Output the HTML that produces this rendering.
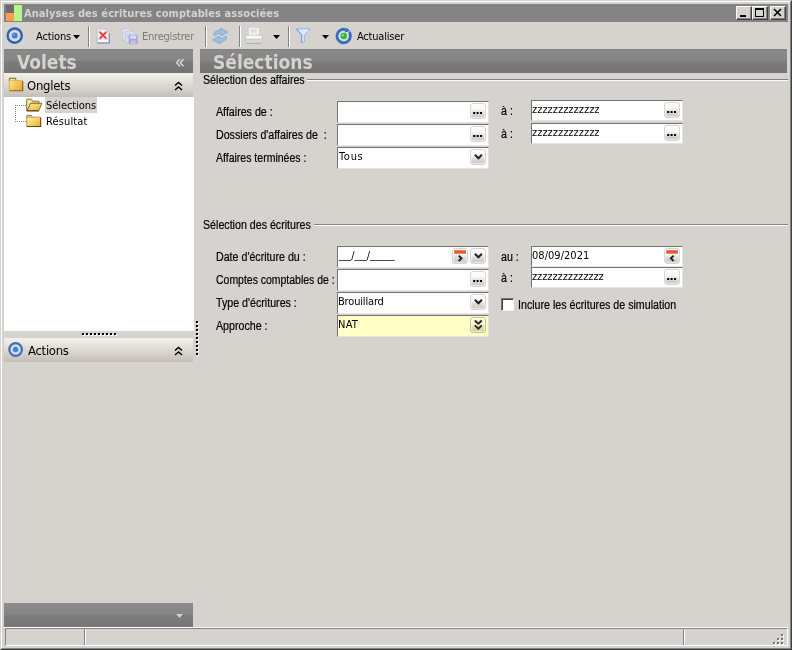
<!DOCTYPE html>
<html lang="fr">
<head>
<meta charset="utf-8">
<title>Analyses des écritures comptables associées</title>
<style>
*{box-sizing:border-box;margin:0;padding:0}
html,body{width:792px;height:650px;overflow:hidden}
body{background:#d6d3ce;font-family:"Liberation Sans",sans-serif;font-size:12px;color:#000;position:relative}
.abs{position:absolute}
.tah{font-family:"DejaVu Sans Condensed","DejaVu Sans","Liberation Sans",sans-serif}
.t{position:absolute;white-space:nowrap;line-height:1}
/* window frame */
#frame{left:0;top:0;width:792px;height:650px;border-top:1px solid #d6d3ce;border-left:1px solid #d6d3ce;border-right:1px solid #404040;border-bottom:1px solid #404040}
#frame2{left:1px;top:1px;width:790px;height:648px;border-top:1px solid #fff;border-left:1px solid #fff;border-right:1px solid #848284;border-bottom:1px solid #848284}
#title{left:4px;top:4px;width:784px;height:18px;background:#858386}
#title .txt{left:20px;top:3px;font-weight:bold;font-size:11px;color:#d6d3ce;line-height:14px;letter-spacing:0.08px}
.wb{position:absolute;top:2px;width:16px;height:14px;background:#d6d3ce;border-top:1px solid #fff;border-left:1px solid #fff;border-right:1px solid #404040;border-bottom:1px solid #404040;box-shadow:inset -1px -1px 0 #848284}
/* toolbar */
.sep{position:absolute;top:26px;width:2px;height:21px;border-left:1px solid #848284;border-right:1px solid #fff}
/* panels */
.hdr{position:absolute;top:49px;height:24px;background:linear-gradient(#7f7f7f 0,#898989 8%,#868686 46%,#7b7b7b 56%,#747474 100%);color:#d6d3ce;font-weight:bold}
.ghdr{position:absolute;left:4px;width:189px;height:24px;background:linear-gradient(#f3f1ec 0%,#e6e3dd 30%,#d6d3cc 62%,#c4c0b7 100%)}
/* inputs */
.inp{position:absolute;height:22px;background:#fff;border-top:1px solid #737373;border-left:1px solid #737373;border-right:1px solid #e6e4e0;border-bottom:1px solid #e6e4e0}
.inp.y{background:#ffffc6}
.inp{width:152px}
.inp.r{height:21px}
.ib{position:absolute;right:2px;top:1px;width:16px;height:16px;border:1px solid #d5d4d1;border-radius:3px;background:linear-gradient(#fff 0%,#f6f6f5 40%,#dcdbd9 62%,#cac9c7 100%);box-shadow:inset 0 0 0 1px rgba(255,255,255,.55)}
.y .ib{background:linear-gradient(#ffffd6 0%,#f8f8c8 40%,#e0e0b2 62%,#cfcfa4 100%);border-color:#c2c298}
.ic{position:absolute;left:-1px;top:-1px}
.chk{position:absolute;left:501px;top:298px;width:13px;height:13px;background:#fff;border-top:1px solid #737373;border-left:1px solid #737373;border-right:1px solid #f4f3f0;border-bottom:1px solid #f4f3f0;box-shadow:inset 1px 1px 0 #404040}
.val{position:absolute;left:0;top:1px;font-size:11px;line-height:14px;white-space:nowrap;font-family:"DejaVu Sans Condensed","DejaVu Sans","Liberation Sans",sans-serif}
.cb .val,.r .val{top:2px}
.lbl{position:absolute;font-size:12px;line-height:14px;white-space:nowrap;transform:scaleX(0.888);transform-origin:0 0;-webkit-text-stroke:0.2px #000}
.gline{position:absolute;height:2px;border-top:1px solid #848284;border-bottom:1px solid #fff}
.sb{position:absolute;top:628px;height:18px;border-top:1px solid #848284;border-left:1px solid #848284;border-right:1px solid #fff;border-bottom:1px solid #fff}
</style>
</head>
<body>
<div id="root" style="position:absolute;left:0;top:0;width:792px;height:650px;will-change:transform">
<div id="frame" class="abs"></div>
<div id="frame2" class="abs"></div>

<!-- title bar -->
<div id="title" class="abs">
  <svg class="abs" style="left:2px;top:1px" width="16" height="16" viewBox="0 0 16 16"><rect x="0" y="0" width="8" height="8" fill="#6b6b6b"/><rect x="0" y="8" width="8" height="8" fill="#ff9c52"/><rect x="8" y="0" width="8" height="16" fill="#b5f58c"/></svg>
  <div class="t txt tah">Analyses des écritures comptables associées</div>
  <div class="wb" style="left:732px"><svg width="14" height="12" class="abs" style="left:0;top:0"><rect x="3" y="8" width="6" height="2" fill="#000"/></svg></div>
  <div class="wb" style="left:748px"><svg width="14" height="12" class="abs" style="left:0;top:0"><rect x="2.5" y="1.5" width="8" height="8" fill="none" stroke="#000"/><rect x="2" y="1" width="9" height="2" fill="#000"/></svg></div>
  <div class="wb" style="left:766px"><svg width="14" height="12" class="abs" style="left:0;top:0"><path d="M3 2 L10 9 M10 2 L3 9" stroke="#000" stroke-width="1.6" fill="none"/></svg></div>
</div>

<!-- toolbar -->
<div id="toolbar" class="abs" style="left:4px;top:22px;width:784px;height:27px"></div>
<svg class="abs" style="left:6px;top:27px" width="18" height="18" viewBox="0 0 18 18"><circle cx="8.700" cy="8.600" r="7.100" fill="#dddcd6" stroke="#2d60b9" stroke-width="2.400"/><circle cx="8.700" cy="8.600" r="3" fill="#3d7de0"/><circle cx="8" cy="7.800" r="1" fill="#6fa4f2"/></svg>
<div class="t tah" style="left:36px;top:30px;font-size:11px;line-height:13px;letter-spacing:-0.15px">Actions</div>
<svg class="abs" style="left:73px;top:35px" width="8" height="5"><path d="M0 0h7l-3.500 4z" fill="#000"/></svg>
<div class="sep" style="left:88px"></div>
<svg class="abs" style="left:96px;top:28px" width="15" height="17" viewBox="0 0 15 17"><path d="M1.200 1.100h8.800l3 3v10.600h-11.800z" fill="#fff" stroke="#b4bfd6" stroke-width="1"/><path d="M1.200 15.100h12.200v-10" fill="none" stroke="#8c99b4" stroke-width="1.200"/><path d="M3.800 4l6.400 6.600M10.200 4l-6.400 6.600" stroke="#ffb9b9" stroke-width="3.200" stroke-linecap="round"/><path d="M3.800 4l6.400 6.600M10.200 4l-6.400 6.600" stroke="#e23030" stroke-width="1.400"/></svg>
<svg class="abs" style="left:122px;top:28px" width="17" height="17" viewBox="0 0 17 17"><path d="M0.900 0.900h7l2 2v9h-9z" fill="#e4e9f3" stroke="#c3cbdc" stroke-width="0.900"/><path d="M3.200 3.200h7l2 2v9h-9z" fill="#dde4f1" stroke="#bcc6dc" stroke-width="0.900"/><path d="M4.500 6h5M4.500 8h5M4.500 10h3" stroke="#b7c6e4" stroke-width="0.900"/><rect x="6.700" y="6.800" width="9" height="9.400" rx="0.800" fill="#a7a9dc"/><rect x="8.200" y="7.400" width="6" height="3.400" fill="#d6d8f0"/><rect x="8.800" y="12.400" width="4.800" height="3.800" fill="#c2c4ea"/></svg>
<div class="t tah" style="left:142px;top:30px;font-size:11px;line-height:13px;color:#7b7975;letter-spacing:-0.22px">Enregistrer</div>
<div class="sep" style="left:205px"></div>
<svg class="abs" style="left:211px;top:27px" width="19" height="18" viewBox="0 0 19 18"><g fill="#9cc1e8" stroke="#7d9cc6" stroke-width="0.700"><path d="M2.900 8C3 4.500 6 3.200 9.400 3.300V1.100L17 5.100L10 8.800V6.600C7 6.400 5.300 7 4.600 8.800Z"/><path d="M2.900 8C3 4.500 6 3.200 9.400 3.300V1.100L17 5.100L10 8.800V6.600C7 6.400 5.300 7 4.600 8.800Z" transform="rotate(180 9.300 9)"/></g></svg>
<div class="sep" style="left:239px"></div>
<svg class="abs" style="left:244px;top:26px" width="20" height="19" viewBox="0 0 20 19"><rect x="4.300" y="1.300" width="11.100" height="8.200" fill="#f5f5f5" stroke="#c9c9c9" stroke-width="0.800"/><rect x="6.300" y="2.900" width="7" height="3.800" fill="#dddddd"/><rect x="1.500" y="9.200" width="17" height="8.300" rx="2" fill="#ededec" stroke="#c0bfbd" stroke-width="0.800"/><rect x="2.500" y="9.800" width="15" height="2.600" rx="1" fill="#f8f8f8"/><path d="M2.500 13.300h15" stroke="#bdbdbd" stroke-width="0.900"/><rect x="2.200" y="14" width="15.600" height="3" fill="#d6d6d5"/><path d="M2.500 17.500h15" stroke="#aeaeae" stroke-width="0.900"/></svg>
<svg class="abs" style="left:273px;top:35px" width="8" height="5"><path d="M0 0h7l-3.500 4z" fill="#000"/></svg>
<div class="sep" style="left:288px"></div>
<svg class="abs" style="left:295px;top:27px" width="16" height="17" viewBox="0 0 16 17"><linearGradient id="fn1" x1="0" y1="0" x2="1" y2="0"><stop offset="0" stop-color="#c4d9f8"/><stop offset="1" stop-color="#f4f8ff"/></linearGradient><path d="M1.200 1.800H15L9.400 8.300V14.600L6.600 16V8.300Z" fill="url(#fn1)" stroke="#86aeec" stroke-width="0.900" stroke-linejoin="round"/><path d="M1.400 2L6.700 8.300V15.800" fill="none" stroke="#6696e4" stroke-width="0.900"/></svg>
<svg class="abs" style="left:322px;top:35px" width="8" height="5"><path d="M0 0h7l-3.500 4z" fill="#000"/></svg>
<svg class="abs" style="left:335px;top:27px" width="18" height="18" viewBox="0 0 18 18"><circle cx="8.700" cy="9" r="5.500" fill="#dfe3e6"/><path d="M14.190 5.160A6.700 6.700 0 1 1 10.430 2.530" fill="none" stroke="#3b6cc2" stroke-width="2.800"/><path d="M11.100 0.400L15.300 3.900L9.700 5.400Z" fill="#3b6cc2"/><circle cx="8.700" cy="9" r="3.300" fill="#2fbc33"/><circle cx="8" cy="8.200" r="1.200" fill="#6fe070"/></svg>
<div class="t tah" style="left:357px;top:30px;font-size:11px;line-height:13px;letter-spacing:-0.2px">Actualiser</div>

<!-- left panel -->
<div class="hdr" style="left:4px;width:189px"></div>
<div class="t tah" style="left:17px;top:51px;font-size:19px;line-height:22px;font-weight:bold;color:#d6d3ce">Volets</div>
<div class="t" style="left:175.500px;top:55px;font-size:16px;line-height:14px;color:#dedbd6;-webkit-text-stroke:0.3px #dedbd6">«</div>

<div class="ghdr" style="top:73px"></div>
<svg class="abs" style="left:8px;top:77px" width="16" height="15" viewBox="0 0 16 15"><linearGradient id="fg1" x1="0" y1="0" x2="1" y2="0.600"><stop offset="0" stop-color="#faed9e"/><stop offset="0.550" stop-color="#f3c45a"/><stop offset="1" stop-color="#eeaa38"/></linearGradient><path d="M1.300 4.200V1.700Q1.300 1.200 1.800 1.200H7.300Q7.800 1.200 7.800 1.700V3.900" fill="#e8dfb6" stroke="#7d6424" stroke-width="1"/><rect x="1.200" y="3.600" width="13.500" height="10.100" fill="url(#fg1)"/><path d="M1.300 13.700H14.700V3.900" fill="none" stroke="#7f6222" stroke-width="1.100"/><path d="M1.300 13.700V3.700H14.700" fill="none" stroke="#cfa548" stroke-width="0.800"/></svg>
<div class="t tah" style="left:27px;top:78px;font-size:13px;line-height:15px;letter-spacing:-0.28px">Onglets</div>
<svg class="abs" style="left:174px;top:81px" width="9" height="10" viewBox="0 0 9 10"><path d="M1 4.500l3.500-3 3.500 3M1 9l3.500-3 3.500 3" stroke="#000" stroke-width="1.500" fill="none"/></svg>

<div class="abs" style="left:4px;top:97px;width:190px;height:234px;background:#fff"></div>
<div class="abs" style="left:15px;top:105px;width:11px;height:1px;border-top:1px dotted #848284"></div>
<div class="abs" style="left:15px;top:105px;width:1px;height:17px;border-left:1px dotted #848284"></div>
<div class="abs" style="left:15px;top:121px;width:11px;height:1px;border-top:1px dotted #848284"></div>
<svg class="abs" style="left:26px;top:98px" width="17" height="14" viewBox="0 0 17 14"><linearGradient id="fg2" x1="0" y1="0" x2="1" y2="1"><stop offset="0" stop-color="#fdf0a0"/><stop offset="1" stop-color="#efae30"/></linearGradient><path d="M0.700 12.600V1.700Q0.700 1.200 1.200 1.200H5.500L6.500 3.200H13V5.300H4.600L1.400 12.600Z" fill="#f7e9a6" stroke="#7d6828" stroke-width="0.900"/><path d="M4.600 5.300H15.900L12.800 12.600H1.200Z" fill="url(#fg2)" stroke="#7d6828" stroke-width="0.900"/><path d="M0.800 12.900H12.900" stroke="#4e3f16" stroke-width="1.100"/></svg>
<div class="abs" style="left:45px;top:97px;width:52px;height:16px;background:#d6d3ce"></div>
<div class="t tah" style="left:46px;top:99px;font-size:11px;line-height:13px;letter-spacing:-0.08px">Sélections</div>
<svg class="abs" style="left:26px;top:114px" width="16" height="14" viewBox="0 0 16 14"><linearGradient id="fg3" x1="0" y1="0" x2="1" y2="0.800"><stop offset="0" stop-color="#fdf2a8"/><stop offset="0.600" stop-color="#f6cf62"/><stop offset="1" stop-color="#eeb038"/></linearGradient><path d="M0.700 3.600V1.900Q0.700 1.400 1.200 1.400H5.400L6.400 3.200" fill="#f5e6a4" stroke="#7d6828" stroke-width="0.900"/><rect x="0.700" y="3.200" width="14" height="9.200" fill="url(#fg3)"/><path d="M0.700 12.400V3.200H14.700" fill="none" stroke="#a88a3a" stroke-width="0.800"/><path d="M0.700 12.500H14.700V3.400" fill="none" stroke="#5a4a1c" stroke-width="1.100"/></svg>
<div class="t tah" style="left:46px;top:115px;font-size:11px;line-height:13px;letter-spacing:0.12px">Résultat</div>

<div class="abs" style="left:83px;top:334px;width:34px;height:2px;background:repeating-linear-gradient(90deg,#fff 0 2px,transparent 2px 4px)"></div><div class="abs" style="left:82px;top:333px;width:34px;height:2px;background:repeating-linear-gradient(90deg,#000 0 2px,transparent 2px 4px)"></div>

<div class="ghdr" style="top:338px"></div>
<svg class="abs" style="left:7px;top:341px" width="17" height="17" viewBox="0 0 17 17"><circle cx="8.600" cy="8.500" r="6.300" fill="#dcdbd6" stroke="#406cc4" stroke-width="2.200"/><circle cx="8.600" cy="8.500" r="2.700" fill="#3a86e6"/></svg>
<div class="t tah" style="left:28px;top:343px;font-size:13px;line-height:15px;letter-spacing:-0.3px">Actions</div>
<svg class="abs" style="left:174px;top:346px" width="9" height="10" viewBox="0 0 9 10"><path d="M1 4.500l3.500-3 3.500 3M1 9l3.500-3 3.500 3" stroke="#000" stroke-width="1.500" fill="none"/></svg>

<div class="abs" style="left:4px;top:603px;width:189px;height:24px;background:linear-gradient(#8c8c8c 0%,#868686 46%,#7b7b7b 54%,#777 100%)"></div>
<svg class="abs" style="left:176px;top:614px" width="8" height="5"><path d="M0 0h7l-3.500 4z" fill="#d6d3ce"/></svg>

<!-- splitter dots -->
<div class="abs" style="left:197px;top:322px;width:2px;height:34px;background:repeating-linear-gradient(180deg,#fff 0 2px,transparent 2px 4px)"></div><div class="abs" style="left:196px;top:321px;width:2px;height:34px;background:repeating-linear-gradient(180deg,#000 0 2px,transparent 2px 4px)"></div>

<!-- right panel -->
<div class="hdr" style="left:200px;width:587px"></div>
<div class="t tah" style="left:213px;top:51px;font-size:19px;line-height:22px;font-weight:bold;color:#d6d3ce">Sélections</div>

<div class="lbl" style="left:203px;top:73px">Sélection des affaires</div>
<div class="gline" style="left:307px;top:79px;width:481px"></div>

<div class="lbl" style="left:216px;top:105px">Affaires de :</div>
<div class="inp" style="left:337px;top:101px"><div class="ib"><svg class="ic" width="16" height="16"><rect x="3.200" y="9" width="2" height="2"/><rect x="6.600" y="9" width="2" height="2"/><rect x="10" y="9" width="2" height="2"/></svg></div></div>
<div class="lbl" style="left:501px;top:104px">à :</div>
<div class="inp r" style="left:531px;top:100px"><div class="val">zzzzzzzzzzzzz</div><div class="ib"><svg class="ic" width="16" height="16"><rect x="3.200" y="9" width="2" height="2"/><rect x="6.600" y="9" width="2" height="2"/><rect x="10" y="9" width="2" height="2"/></svg></div></div>

<div class="lbl" style="left:216px;top:128px">Dossiers d'affaires de&nbsp; :</div>
<div class="inp" style="left:337px;top:124px"><div class="ib"><svg class="ic" width="16" height="16"><rect x="3.200" y="9" width="2" height="2"/><rect x="6.600" y="9" width="2" height="2"/><rect x="10" y="9" width="2" height="2"/></svg></div></div>
<div class="lbl" style="left:501px;top:127px">à :</div>
<div class="inp r" style="left:531px;top:123px"><div class="val">zzzzzzzzzzzzz</div><div class="ib"><svg class="ic" width="16" height="16"><rect x="3.200" y="9" width="2" height="2"/><rect x="6.600" y="9" width="2" height="2"/><rect x="10" y="9" width="2" height="2"/></svg></div></div>

<div class="lbl" style="left:216px;top:151px;transform:scaleX(0.876)">Affaires terminées :</div>
<div class="inp cb" style="left:337px;top:147px"><div class="val" style="left:1px;letter-spacing:0.7px">Tous</div><div class="ib"><svg class="ic" width="16" height="16"><path d="M4.900 5.700l3.500 3.600 3.500-3.600" stroke="#222" stroke-width="2" fill="none"/></svg></div></div>

<div class="lbl" style="left:203px;top:218px">Sélection des écritures</div>
<div class="gline" style="left:314px;top:224px;width:474px"></div>

<div class="lbl" style="left:216px;top:250px">Date d'écriture du :</div>
<div class="inp" style="left:337px;top:246px"><div class="val" style="left:1px;font-family:'Liberation Sans',sans-serif">__<span class="tah">/</span>__<span class="tah">/</span>____</div><div class="ib" style="right:20px"><svg class="ic" width="16" height="16"><rect x="2.200" y="2.200" width="11.700" height="3.500" fill="#e65a33"/><path d="M6.700 7.600l2.800 2.700-2.800 2.700" stroke="#222" stroke-width="1.900" fill="none"/></svg></div><div class="ib"><svg class="ic" width="16" height="16"><path d="M4.900 5.700l3.500 3.600 3.500-3.600" stroke="#222" stroke-width="2" fill="none"/></svg></div></div>
<div class="lbl" style="left:501px;top:250px">au :</div>
<div class="inp r cb" style="left:531px;top:246px"><div class="val" style="letter-spacing:0.03px">08/09/2021</div><div class="ib"><svg class="ic" width="16" height="16"><rect x="2.200" y="2.200" width="11.700" height="3.500" fill="#e65a33"/><path d="M9.600 7.600l-2.800 2.700 2.800 2.700" stroke="#222" stroke-width="1.900" fill="none"/></svg></div></div>

<div class="lbl" style="left:216px;top:273px;transform:scaleX(0.872)">Comptes comptables de :</div>
<div class="inp" style="left:337px;top:269px"><div class="ib"><svg class="ic" width="16" height="16"><rect x="3.200" y="9" width="2" height="2"/><rect x="6.600" y="9" width="2" height="2"/><rect x="10" y="9" width="2" height="2"/></svg></div></div>
<div class="lbl" style="left:501px;top:271px">à :</div>
<div class="inp r" style="left:531px;top:267px"><div class="val" style="letter-spacing:-0.07px">zzzzzzzzzzzzzz</div><div class="ib"><svg class="ic" width="16" height="16"><rect x="3.200" y="9" width="2" height="2"/><rect x="6.600" y="9" width="2" height="2"/><rect x="10" y="9" width="2" height="2"/></svg></div></div>

<div class="lbl" style="left:216px;top:296px">Type d'écritures :</div>
<div class="inp cb" style="left:337px;top:292px"><div class="val" style="letter-spacing:-0.17px">Brouillard</div><div class="ib"><svg class="ic" width="16" height="16"><path d="M4.900 5.700l3.500 3.600 3.500-3.600" stroke="#222" stroke-width="2" fill="none"/></svg></div></div>
<div class="chk"></div>
<div class="lbl" style="left:518px;top:298px">Inclure les écritures de simulation</div>

<div class="lbl" style="left:216px;top:319px">Approche :</div>
<div class="inp cb y" style="left:337px;top:315px"><div class="val" style="letter-spacing:0.25px">NAT</div><div class="ib"><svg class="ic" width="16" height="16"><path d="M4.800 3.500l3.500 3.200 3.500-3.200M4.800 8.400l3.500 3.200 3.500-3.200" stroke="#26261a" stroke-width="1.900" fill="none"/></svg></div></div>

<!-- status bar -->
<div class="abs" style="left:4px;top:627px;width:784px;height:1px;background:#fff"></div>
<div class="sb" style="left:5px;width:783px"></div>
<div class="abs" style="left:84px;top:629px;width:2px;height:16px;border-left:1px solid #848284;border-right:1px solid #fff"></div>
<div class="abs" style="left:683px;top:629px;width:2px;height:16px;border-left:1px solid #848284;border-right:1px solid #fff"></div>
<svg class="abs" style="left:773px;top:634px" width="11" height="11" viewBox="0 0 11 11"><g fill="#fff"><rect x="9" y="1" width="2" height="2"/><rect x="5" y="5" width="2" height="2"/><rect x="9" y="5" width="2" height="2"/><rect x="1" y="9" width="2" height="2"/><rect x="5" y="9" width="2" height="2"/><rect x="9" y="9" width="2" height="2"/></g><g fill="#777572"><rect x="8" y="0" width="2" height="2"/><rect x="4" y="4" width="2" height="2"/><rect x="8" y="4" width="2" height="2"/><rect x="0" y="8" width="2" height="2"/><rect x="4" y="8" width="2" height="2"/><rect x="8" y="8" width="2" height="2"/></g></svg>
</div>
</body>
</html>
